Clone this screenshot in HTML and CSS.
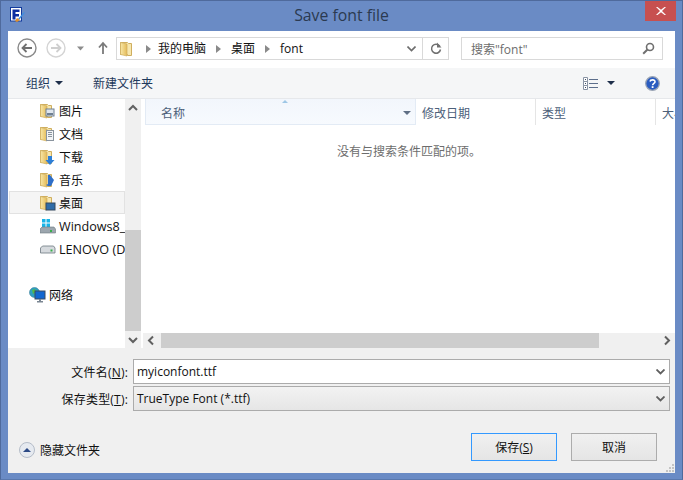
FILE: index.html
```html
<!DOCTYPE html>
<html lang="zh-CN">
<head>
<meta charset="utf-8">
<title>Save font file</title>
<link rel="stylesheet" href="styles.css">
</head>
<body>
<svg class="defs" width="0" height="0">
  <defs>
    <linearGradient id="fg" x1="0" y1="0" x2="1" y2="0"><stop offset="0" stop-color="#f8e7a8"/><stop offset="1" stop-color="#e4bb58"/></linearGradient>
    <symbol id="folder" viewBox="0 0 14 16">
      <path d="M.5 1.500h7l1 1h3v12h-4v-1h-7z" fill="#f7e7ae" stroke="#cfae5f"/>
      <path d="M.5 1.500l6.500 1.500v12l-6.500-1.500z" fill="url(#fg)" stroke="#cfae5f" stroke-width=".7"/>
    </symbol>
  </defs>
</svg>
<div class="window">
  <header class="titlebar">
    <svg class="app-icon" width="16" height="16" viewBox="0 0 16 16"><rect x=".5" y=".5" width="11" height="13.500" fill="#fff" stroke="#123a9c"/><path d="M2.500 2.500h7v2.500H5.500v2h3.500v2.500H5.500v3H2.500z" fill="#0c2ea0"/><path d="M8 12l5-6 2-1-1 2-5 6z" fill="#3f8ee0"/><path d="M7 11l3 2-3 2-2-1z" fill="#e0902c"/></svg>
    <div class="title">Save font file</div>
    <div class="close"><svg width="10" height="8" viewBox="0 0 10 8"><path d="M1.500 0L5 2.700 8.500 0H10L6 4l4 4H8.500L5 5.300 1.500 8H0l4-4-4-4z" fill="#fff"/></svg></div>
  </header>
  <main class="client">
    <div class="navbar">
      <svg class="nav-svg" width="100" height="22" viewBox="0 0 100 22">
        <circle cx="19" cy="11" r="9" fill="#fff" stroke="#8a8a8a" stroke-width="1.400"/>
        <path d="M24 11h-9M18.500 7l-4 4 4 4" fill="none" stroke="#707070" stroke-width="1.800"/>
        <circle cx="48" cy="11" r="9" fill="#fff" stroke="#d4d4d4" stroke-width="1.400"/>
        <path d="M43 11h9M48.500 7l4 4-4 4" fill="none" stroke="#cfcfcf" stroke-width="1.800"/>
        <path d="M69 9.500h7l-3.500 4z" fill="#8c8c8c"/>
        <path d="M95 17V7M91 10.500l4-4.500 4 4.500" fill="none" stroke="#7a7a7a" stroke-width="1.800"/>
      </svg>
      <div class="breadcrumb">
        <svg class="crumb-folder" width="14" height="16"><use href="#folder" width="14" height="16"/></svg>
        <span class="sep sep-first"></span><span class="crumb">我的电脑</span>
        <span class="sep"></span><span class="crumb">桌面</span>
        <span class="sep"></span><span class="crumb">font</span>
        <span class="spacer"></span>
        <svg class="chev" width="9" height="6" viewBox="0 0 9 6"><path d="M.5.500l4 4 4-4" fill="none" stroke="#6d6d6d" stroke-width="1.600"/></svg>
        <span class="refresh"><svg width="12" height="13" viewBox="0 0 12 13"><path d="M9.800 4.200A4.500 4.500 0 1 0 10.500 7.500" fill="none" stroke="#707070" stroke-width="1.500"/><path d="M7 .5v5h4.500z" fill="#707070"/></svg></span>
      </div>
      <div class="search">
        <span>搜索"font"</span>
        <svg width="13" height="13" viewBox="0 0 13 13"><circle cx="8" cy="5" r="3.500" fill="none" stroke="#6f6f6f" stroke-width="1.600"/><path d="M5.500 7.500L1.200 11.800" stroke="#6f6f6f" stroke-width="2"/></svg>
      </div>
    </div>
    <div class="toolbar">
      <span class="tool">组织<i class="caret"></i></span>
      <span class="tool tool-new">新建文件夹</span>
      <span class="spacer"></span>
      <svg class="view-icon" width="15" height="13" viewBox="0 0 15 13"><path d="M.5.500h4v4h-4zM.5 4.500h4v4h-4zM.5 8.500h4v4h-4z" fill="#fff" stroke="#8a94a4"/><path d="M2 2h1v1H2zM2 6h1v1H2zM2 10h1v1H2z" fill="#3c4a60"/><path d="M6 2.500h9M6 6.500h9M6 10.500h9" stroke="#5d6f8c"/></svg>
      <i class="caret caret-view"></i>
      <svg class="help" width="15" height="15" viewBox="0 0 15 15"><circle cx="7.500" cy="7.500" r="6.800" fill="#2a5cc0" stroke="#9aa4b4" stroke-width="1.300"/><path d="M5 5.500c.5-2.200 5.200-2.200 5 .4-.1 1.500-2.300 1.600-2.400 3.300" fill="none" stroke="#fff" stroke-width="1.600"/><rect x="6.700" y="10.200" width="1.800" height="1.800" fill="#fff"/></svg>
    </div>
    <div class="browser">
      <nav class="navpane">
        <div class="tree">
          <div class="item"><svg class="ic" width="19" height="16"><use href="#folder" width="14" height="16"/><rect x="6" y="6" width="8" height="7" fill="#dfe6ee" stroke="#6f8093"/><rect x="7" y="10" width="6" height="2" fill="#6f8093"/></svg><span>图片</span></div>
          <div class="item"><svg class="ic" width="19" height="16"><use href="#folder" width="14" height="16"/><rect x="6.500" y="4.500" width="7" height="10" fill="#f2f4f6" stroke="#8a949e"/><path d="M8 6.500h4M8 8.500h4M8 10.500h4" stroke="#8a949e"/></svg><span>文档</span></div>
          <div class="item"><svg class="ic" width="19" height="16"><use href="#folder" width="14" height="16"/><path d="M8 7h4v4h2.500L10 16l-4.500-5H8z" fill="#2e7fd6"/></svg><span>下载</span></div>
          <div class="item"><svg class="ic" width="19" height="16"><use href="#folder" width="14" height="16"/><path d="M8 3l2 0 4 5-3 6H8l-2-1 2-1z" fill="#2f6fc8"/></svg><span>音乐</span></div>
          <div class="item selected"><svg class="ic" width="19" height="16"><use href="#folder" width="14" height="16"/><rect x="6" y="8" width="9" height="7" fill="#2f6ca8" stroke="#34495e"/></svg><span>桌面</span></div>
          <div class="item item-latin"><svg class="ic" width="19" height="16"><path d="M1 1h3.500v3.500H1zM5.500 1H9v3.500H5.500zM1 5.500h3.500V9H1zM5.500 5.500H9V9H5.500z" fill="#18b4e8" transform="translate(1 0)"/><path d="M-1 11l2-2h12l1.500 2v4H-1z" fill="#9ca6ae" stroke="#6d7880" stroke-width=".6" transform="translate(1 0)"/><rect x="10" y="12" width="2" height="2" fill="#36b04a"/></svg><span>Windows8_OS (C:)</span></div>
          <div class="item item-latin"><svg class="ic" width="19" height="16"><path d="M.5 7l2-2h11l1.500 2v5H.5z" fill="#d6dade" stroke="#6d7880" stroke-width=".8"/><rect x="10.500" y="8.500" width="2" height="2" fill="#36b04a"/></svg><span>LENOVO (D:)</span></div>
          <div class="item item-group"><svg class="ic" width="18" height="16" viewBox="0 0 18 16"><circle cx="5.500" cy="5.500" r="5" fill="#2fa0c0" stroke="#3d7f9c" stroke-width=".6"/><path d="M3 3l3-1 1 3-3 2z" fill="#52b848"/><rect x="6" y="4" width="10" height="8" fill="#1266d0" stroke="#3a4a62"/><rect x="10" y="12" width="2" height="2" fill="#7a8692"/><rect x="8" y="14" width="6" height="1.500" fill="#7a8692"/></svg><span>网络</span></div>
        </div>
      </nav>
      <div class="vscroll">
        <svg class="arrow" width="16" height="17" viewBox="0 0 16 17"><path d="M4 11l4-4 4 4" fill="none" stroke="#606060" stroke-width="2"/></svg>
        <div class="vspace"></div>
        <div class="vthumb"></div>
        <svg class="arrow" width="16" height="17" viewBox="0 0 16 17"><path d="M4 7l4 4 4-4" fill="none" stroke="#606060" stroke-width="2"/></svg>
      </div>
      <section class="files">
        <div class="header">
          <div class="col col-name"><span>名称</span><i class="sort"></i><i class="col-drop"></i></div>
          <div class="col col-date">修改日期</div>
          <div class="col col-type">类型</div>
          <div class="col col-size">大小</div>
        </div>
        <div class="empty">没有与搜索条件匹配的项。</div>
        <div class="hscroll">
          <svg width="16" height="15" viewBox="0 0 16 15"><path d="M10 3.500l-4 4 4 4" fill="none" stroke="#606060" stroke-width="2"/></svg>
          <div class="hthumb"></div>
          <div class="hspace"></div>
          <svg width="16" height="15" viewBox="0 0 16 15"><path d="M6 3.500l4 4-4 4" fill="none" stroke="#606060" stroke-width="2"/></svg>
        </div>
      </section>
    </div>
    <div class="form">
      <div class="row">
        <label class="lbl">文件名(<u>N</u>):</label>
        <div class="field input"><span>myiconfont.ttf</span><svg width="9" height="6" viewBox="0 0 9 6"><path d="M.5.500l4 4 4-4" fill="none" stroke="#5f5f5f" stroke-width="1.800"/></svg></div>
      </div>
      <div class="row">
        <label class="lbl">保存类型(<u>T</u>):</label>
        <div class="field select"><span>TrueType Font (*.ttf)</span><svg width="9" height="6" viewBox="0 0 9 6"><path d="M.5.500l4 4 4-4" fill="none" stroke="#5f5f5f" stroke-width="1.800"/></svg></div>
      </div>
      <div class="actions">
        <div class="hide">
          <svg width="16" height="16" viewBox="0 0 16 16"><circle cx="8" cy="8" r="7.500" fill="#e6eaf0" stroke="#b4bcc8"/><path d="M4 10l4-4 4 4z" fill="#2c4a86"/></svg>
          <span>隐藏文件夹</span>
        </div>
        <span class="spacer"></span>
        <button class="btn btn-default" type="button">保存(<u>S</u>)</button>
        <button class="btn" type="button">取消</button>
      </div>
    </div>
    <svg class="grip" width="8" height="8" viewBox="0 0 8 8"><path d="M6 0h2v2H6zM3 3h2v2H3zM6 3h2v2H6zM0 6h2v2H0zM3 6h2v2H3zM6 6h2v2H6z" fill="#c4c4c4"/></svg>
  </main>
</div>
</body>
</html>
```
FILE: styles.css
```css
* { box-sizing: border-box; }
html, body { margin: 0; padding: 0; }
body { font-family: "Open Sans", "Noto Sans CJK SC", sans-serif; font-size: 12px; color: #111; }
.defs { display: block; height: 0; }
i { display: block; }
u { text-decoration: underline; }
.spacer { flex: 1; }

.window { width: 683px; height: 480px; background: #6a8bc5; border: 1px solid #4f6a9c; border-bottom-color: #5a78ad; display: flex; flex-direction: column; padding: 0 7px 6px; }
.titlebar { height: 30px; display: flex; align-items: center; flex: none; position: relative; }
.app-icon { position: absolute; left: 2px; top: 6px; }
.title { flex: 1; text-align: center; font-size: 15.800px; line-height: 20px; color: #2b3a50; padding-bottom: 3px; }
.close { position: absolute; right: -1px; top: 0; width: 31px; height: 20px; background: #c75050; display: flex; align-items: center; justify-content: center; }

.client { flex: 1; background: #fff; display: flex; flex-direction: column; position: relative; min-height: 0; }
.navbar { height: 37px; flex: none; display: flex; align-items: center; padding: 0 12px 2px 0; }
.nav-svg { margin-right: 8px; flex: none; margin-top: -1px; }
.breadcrumb { width: 333px; height: 23px; border: 1px solid #d9d9d9; display: flex; align-items: center; padding-left: 3px; color: #111; }
.crumb-folder { flex: none; }
.crumb { font-size: 12px; margin-top: -1px; }
.sep { width: 0; height: 0; border: 4px solid transparent; border-left: 5px solid #8a8a8a; border-right: 0; margin: 0 10px; }
.sep-first { margin: 0 7px 0 12px; }
.chev { margin-right: 6px; }
.refresh { width: 26px; height: 100%; border-left: 1px solid #d9d9d9; display: flex; align-items: center; justify-content: center; }
.search { width: 202px; height: 23px; margin-left: 12px; border: 1px solid #d9d9d9; display: flex; align-items: center; justify-content: space-between; padding: 0 7px 0 9px; color: #6d6d6d; }

.toolbar { height: 31px; flex: none; background: #f5f6f7; display: flex; align-items: center; padding: 0 15px 0 18px; color: #1e395b; border-bottom: 1px solid #e6e8eb; }
.tool { display: flex; align-items: center; }
.tool-new { margin-left: 30px; }
.caret { width: 0; height: 0; border: 4px solid transparent; border-top: 4px solid #1e2f4b; border-bottom: 0; margin-left: 5px; }
.view-icon { flex: none; }
.caret-view { margin-left: 9px; margin-right: 30px; }

.browser { flex: 1; display: flex; min-height: 0; background: #fff; }
.navpane { width: 117px; flex: none; overflow: hidden; }
.tree { display: flex; flex-direction: column; width: 117px; }
.item { height: 23px; display: flex; align-items: center; padding-left: 30px; white-space: nowrap; margin-left: 1px; width: 116px; border: 1px solid transparent; }
.item .ic { flex: none; }
.item span { flex: none; }
.item-latin span { font-size: 12.600px; padding-top: 1px; }
.selected { background: #f5f5f5; border-color: #e2e2e2; }
.item-group { margin-top: 23px; padding-left: 19px; }
.item-group .ic { margin-right: 2px; }
.vscroll { width: 16px; flex: none; background: #f0f0f0; display: flex; flex-direction: column; }
.vscroll .arrow { flex: none; }
.vspace { height: 114px; flex: none; }
.vthumb { flex: 1; background: #cdcdcd; }
.files { flex: 1; margin-left: 2px; display: flex; flex-direction: column; min-width: 0; overflow: hidden; }
.header { height: 26px; flex: none; display: flex; color: #4c607a; overflow: hidden; }
.col { height: 26px; display: flex; align-items: center; flex: none; padding-left: 6px; padding-top: 2px; border-right: 1px solid #e5e5e5; }
.col-name { width: 271px; margin-left: 2px; padding-left: 15px; background: linear-gradient(#f2f6fc, #f7fafe); border: 1px solid #e3ebf5; border-top: 0; position: relative; }
.col-date { width: 120px; }
.col-type { width: 120px; }
.col-size { width: 40px; border: 0; }
.sort { position: absolute; left: 136px; top: 1px; width: 0; height: 0; border: 3px solid transparent; border-bottom: 3px solid #9ec7e6; border-top: 0; }
.col-drop { position: absolute; right: 4px; top: 12px; width: 0; height: 0; border: 4px solid transparent; border-top: 4px solid #5f6f85; border-bottom: 0; }
.empty { flex: 1; text-align: center; color: #6d6d6d; padding-top: 17px; }
.hscroll { height: 15px; flex: none; display: flex; background: #f0f0f0; }
.hthumb { width: 438px; margin-left: 2px; background: #cdcdcd; }
.hspace { flex: 1; }

.form { height: 125px; flex: none; background: #f0f0f0; padding-top: 11px; display: flex; flex-direction: column; gap: 2px; }
.row { display: flex; align-items: center; height: 25px; }
.lbl { width: 120px; text-align: right; flex: none; letter-spacing: .2px; }
.field { width: 537px; margin-left: 5px; height: 25px; border: 1px solid #ababab; display: flex; align-items: center; justify-content: space-between; padding: 0 4px 0 3px; }
.input { background: #fff; }
.select { background: linear-gradient(#f2f2f2, #e6e6e6); }
.actions { display: flex; align-items: center; padding: 20px 18px 0 11px; gap: 14px; }
.hide { display: flex; align-items: center; gap: 5px; align-self: flex-end; margin-bottom: 2px; }
.btn { width: 86px; height: 28px; font: inherit; color: #111; border: 1px solid #acacac; background: linear-gradient(#f0f0f0, #e5e5e5); padding: 0; }
.btn-default { border-color: #3399ff; }
.grip { position: absolute; right: 1px; bottom: 1px; }
```
